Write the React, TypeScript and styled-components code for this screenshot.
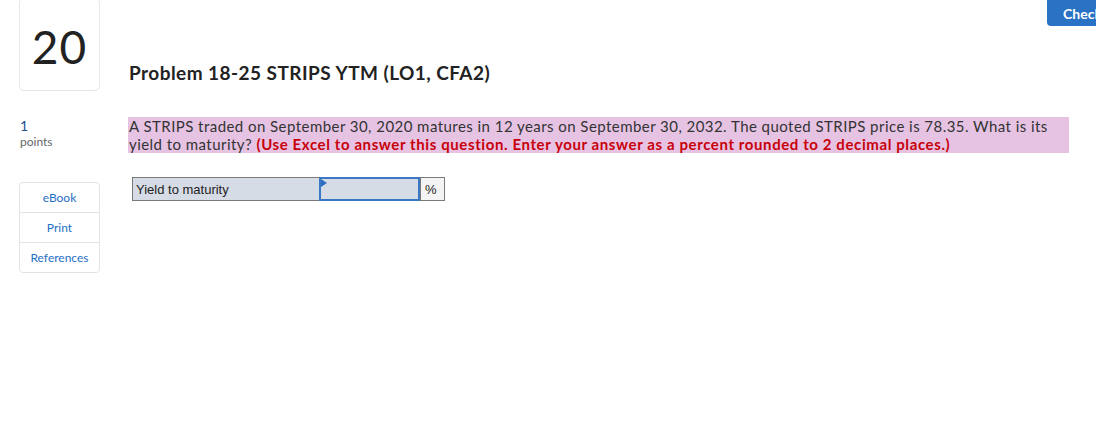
import React from 'react';
import styled, { createGlobalStyle } from 'styled-components';

const GlobalStyle = createGlobalStyle`
  html, body {
    margin: 0;
    padding: 0;
    background: #fff;
    overflow: hidden;
  }
  body {
    font-family: Lato, "Open Sans", sans-serif;
    color: #333;
  }
`;

function App() {
  return (
    <>
      <GlobalStyle />
      <AppWrapper>
        <Sidebar>
          <NumberBox>20</NumberBox>
          <Points>
            <span className="_value">1</span>
            <span className="_label">points</span>
          </Points>
          <LinkList>
            <LinkItem>eBook</LinkItem>
            <LinkItem>Print</LinkItem>
            <LinkItem>References</LinkItem>
          </LinkList>
        </Sidebar>
        <Main>
          <Title>Problem 18-25 STRIPS YTM (LO1, CFA2)</Title>
          <Question>
            A STRIPS traded on September 30, 2020 matures in 12 years on September 30, 2032. The quoted STRIPS price is 78.35. What is its
            yield to maturity? <strong>(Use Excel to answer this question. Enter your answer as a percent rounded to 2 decimal places.)</strong>
          </Question>
          <AnswerTable>
            <Cell $kind="label">Yield to maturity</Cell>
            <Cell $kind="input">
              <span className="_flag" />
            </Cell>
            <Cell $kind="unit">%</Cell>
          </AnswerTable>
        </Main>
        <CheckButton>Check my work</CheckButton>
      </AppWrapper>
    </>
  );
}

export default App;

const AppWrapper = styled.div`
  position: relative;
  width: 1096px;
  height: 432px;
  display: flex;
  align-items: flex-start;
`;

const Sidebar = styled.aside`
  width: 81px;
  margin-left: 19px;
  display: flex;
  flex-direction: column;
`;

const NumberBox = styled.div`
  box-sizing: border-box;
  height: 93px;
  margin-top: -2px;
  border: 1px solid #e6e6e6;
  border-radius: 5px;
  display: flex;
  align-items: center;
  justify-content: center;
  padding-top: 4px;
  font-size: 46px;
  color: #222;
  letter-spacing: 1px;
`;

const Points = styled.div`
  margin-top: 27px;
  display: flex;
  flex-direction: column;
  padding-left: 1px;

  ._value {
    font-size: 14px;
    line-height: 15px;
    color: #1d4f91;
  }
  ._label {
    font-size: 12px;
    line-height: 18px;
    color: #666;
  }
`;

const LinkList = styled.div`
  margin-top: 31px;
  border: 1px solid #e3e3e3;
  border-radius: 4px;
  display: flex;
  flex-direction: column;
`;

const LinkItem = styled.div`
  height: 29px;
  display: flex;
  align-items: center;
  justify-content: center;
  font-size: 12px;
  color: #1f6fc5;

  & + & {
    border-top: 1px solid #e3e3e3;
  }
`;

const Main = styled.main`
  margin-left: 28px;
  width: 941px;
  display: flex;
  flex-direction: column;
`;

const Title = styled.h1`
  margin: 61px 0 0 1px;
  font-size: 19px;
  line-height: 24px;
  font-weight: 700;
  letter-spacing: 0.45px;
  color: #222;
`;

const Question = styled.p`
  margin: 32px 0 0;
  padding: 0 0 0 1px;
  background: #e6c3e3;
  font-size: 15px;
  line-height: 18px;
  letter-spacing: 0.45px;
  color: #333;

  strong {
    color: #c8000a;
    font-weight: 700;
    letter-spacing: 0.6px;
  }
`;

const AnswerTable = styled.div`
  margin: 24px 0 0 4px;
  display: flex;
  align-self: flex-start;
  border: 1px solid #7a7a7a;
  height: 22px;
`;

const Cell = styled.div<{ $kind: 'label' | 'input' | 'unit' }>`
  position: relative;
  box-sizing: border-box;
  height: 22px;
  display: flex;
  align-items: center;
  font-family: "Liberation Sans", Arial, sans-serif;
  font-size: 13px;
  color: #222;
  background: ${p => (p.$kind === 'unit' ? '#f4f4f4' : '#d6dce6')};
  width: ${p => (p.$kind === 'label' ? '186px' : p.$kind === 'input' ? '101px' : '24px')};
  padding-left: ${p => (p.$kind === 'label' ? '3px' : '4px')};
  border-left: ${p => (p.$kind === 'label' ? 'none' : '1px solid #7a7a7a')};
  ${p => p.$kind === 'input' && `
    border: 2px solid #3a78c4;
    margin: -1px 0;
    height: 24px;
  `}

  ._flag {
    position: absolute;
    top: 0;
    left: 0;
    width: 0;
    height: 0;
    border-top: 4px solid transparent;
    border-bottom: 4px solid transparent;
    border-left: 6px solid #2c6fc1;
  }
`;

const CheckButton = styled.button`
  position: absolute;
  top: -4px;
  left: 1047px;
  height: 30px;
  padding: 4px 16px 0;
  border: none;
  border-radius: 4px;
  background: #2a73c4;
  color: #fff;
  font-family: Lato, sans-serif;
  font-size: 14px;
  font-weight: 700;
  white-space: nowrap;
`;
